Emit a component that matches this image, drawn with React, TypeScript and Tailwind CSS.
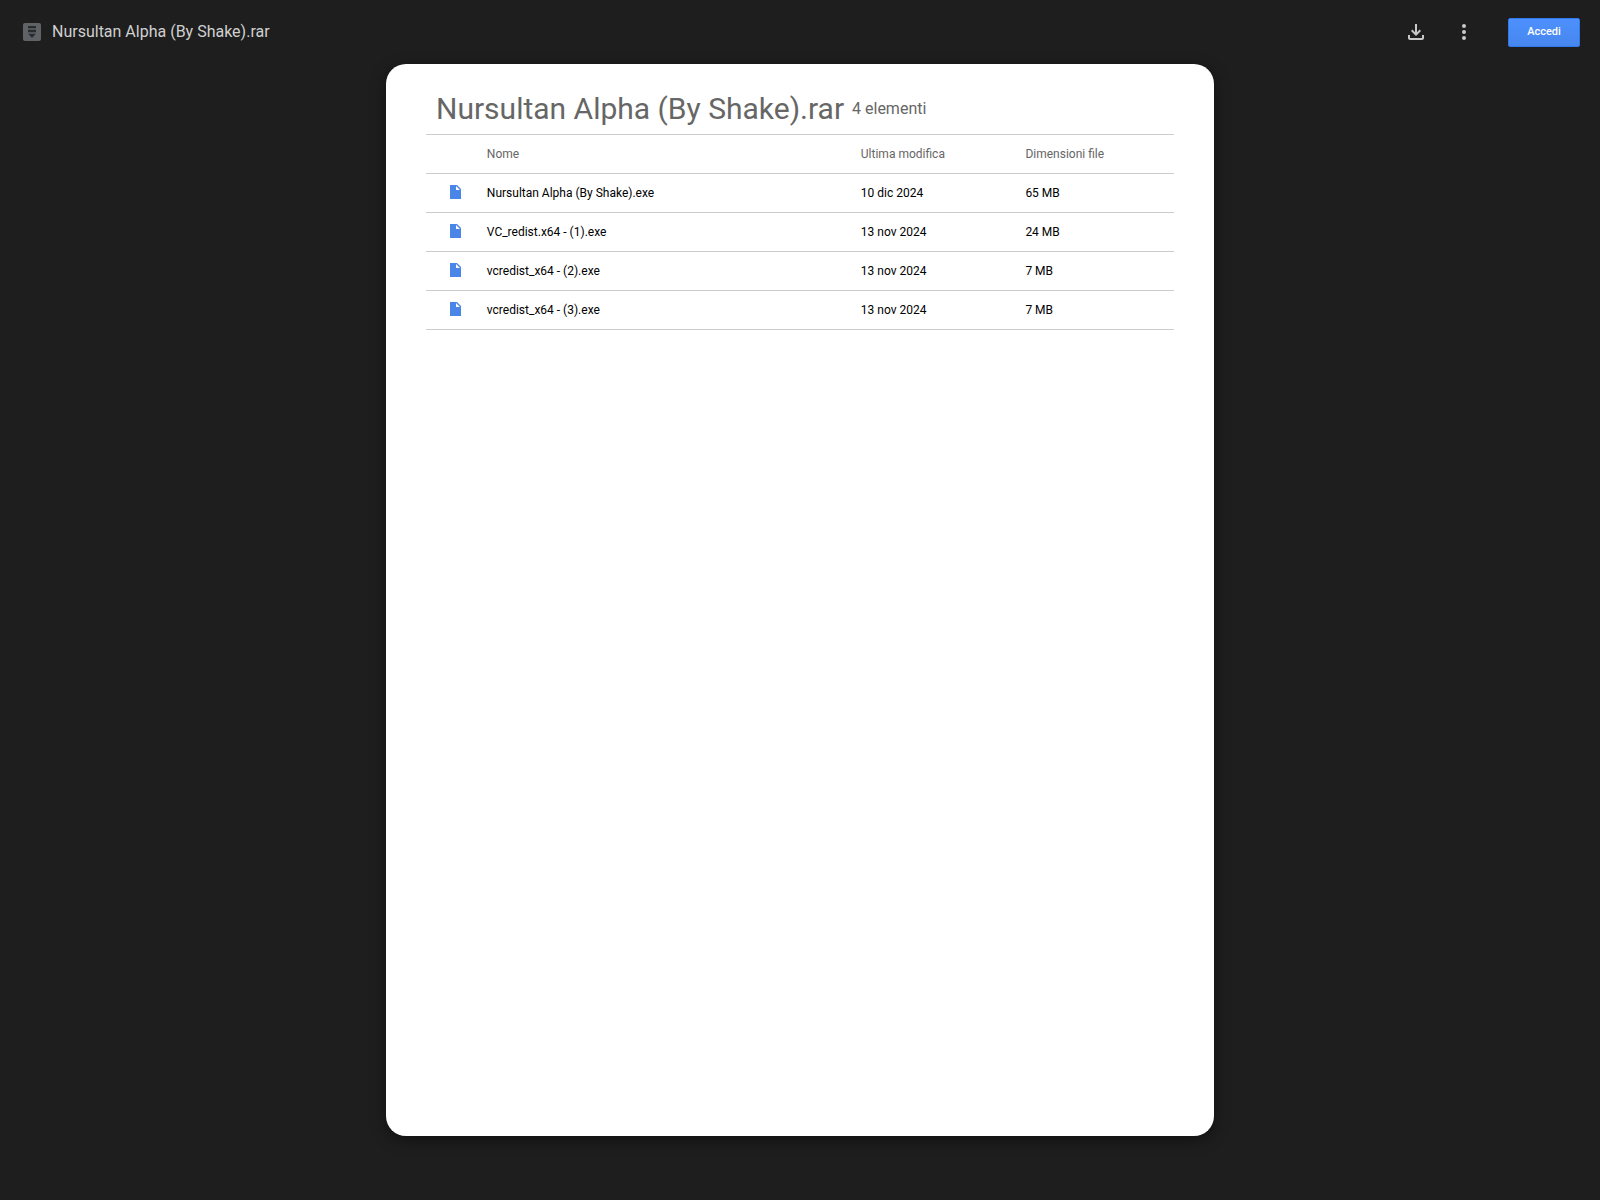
type Entry = { name: string; modified: string; size: string };

const entries: Entry[] = [
  { name: 'Nursultan Alpha (By Shake).exe', modified: '10 dic 2024', size: '65 MB' },
  { name: 'VC_redist.x64 - (1).exe', modified: '13 nov 2024', size: '24 MB' },
  { name: 'vcredist_x64 - (2).exe', modified: '13 nov 2024', size: '7 MB' },
  { name: 'vcredist_x64 - (3).exe', modified: '13 nov 2024', size: '7 MB' },
];

function ArchiveIcon() {
  return (
    <svg className="size-[18px] shrink-0" viewBox="0 0 18 18" aria-hidden="true">
      <rect width="18" height="18" rx="2" fill="#5f6368" />
      <path d="M5 5h8v2H5zM5 9h8v2H5z" fill="#515458" />
      <path d="M5 3h8v2H5zM5 7h8v2H5zM5.5 11h7L9 15z" fill="#2a2b2d" />
    </svg>
  );
}

function DownloadIcon() {
  return (
    <svg className="size-6" viewBox="0 0 24 24" fill="currentColor" aria-hidden="true">
      <path d="M18 15v3H6v-3H4v3c0 1.1.9 2 2 2h12c1.1 0 2-.9 2-2v-3h-2zm-1-4-1.41-1.41L13 12.17V4h-2v8.17L8.41 9.59 7 11l5 5 5-5z" />
    </svg>
  );
}

function MoreIcon() {
  return (
    <svg className="size-6" viewBox="0 0 24 24" fill="currentColor" aria-hidden="true">
      <circle cx="12" cy="6" r="2" />
      <circle cx="12" cy="12" r="2" />
      <circle cx="12" cy="18" r="2" />
    </svg>
  );
}

function FileIcon() {
  return (
    <svg className="mx-auto h-[14px] w-[11px]" viewBox="0 0 11 14" aria-hidden="true">
      <path d="M0 0h7l4 4v10H0z" fill="#4986e7" />
      <path d="M6 1l4 4H6z" fill="#fff" />
    </svg>
  );
}

export default function App() {
  return (
    <div className="flex min-h-screen flex-col bg-[#1e1e1e] font-['Roboto',sans-serif]">
      <header className="flex h-16 items-center pr-5 pl-[23px]">
        <ArchiveIcon />
        <h1 className="ml-[11px] text-base text-[#d0d0d0]">Nursultan Alpha (By Shake).rar</h1>
        <div className="ml-auto flex items-center text-[#c8c8c8]">
          <button type="button" aria-label="Scarica" className="mr-6">
            <DownloadIcon />
          </button>
          <button type="button" aria-label="Altre azioni" className="mr-8">
            <MoreIcon />
          </button>
          <a
            href="#accedi"
            className="flex h-[29px] w-[72px] items-center justify-center rounded-xs border border-[#3079ed] bg-linear-to-b from-[#4d90fe] to-[#4787ed] text-[11px] font-medium text-white"
          >
            Accedi
          </a>
        </div>
      </header>
      <main className="mx-auto mb-16 w-full max-w-[828px] flex-1 rounded-[20px] bg-white px-10 pt-5 shadow-[0_4px_16px_rgba(0,0,0,0.45)]">
        <div className="flex h-[50px] items-center gap-2 px-[10px] text-[#666]">
          <h2 className="text-[30px] leading-10">Nursultan Alpha (By Shake).rar</h2>
          <span className="text-base">4 elementi</span>
        </div>
        <table className="w-full table-fixed border-collapse text-left text-xs text-black">
          <colgroup>
            <col className="w-[8%]" />
            <col className="w-[50%]" />
            <col className="w-[22%]" />
            <col className="w-[20%]" />
          </colgroup>
          <thead>
            <tr className="h-[39px] border-y border-[#ccc] text-[#666]">
              <th />
              <th className="pl-px font-normal">Nome</th>
              <th className="pl-px font-normal">Ultima modifica</th>
              <th className="pl-px font-normal">Dimensioni file</th>
            </tr>
          </thead>
          <tbody>
            {entries.map((entry) => (
              <tr key={entry.name} className="h-[39px] border-b border-[#ccc]">
                <td className="pb-0.5">
                  <FileIcon />
                </td>
                <td className="pl-px">{entry.name}</td>
                <td className="pl-px">{entry.modified}</td>
                <td className="pl-px">{entry.size}</td>
              </tr>
            ))}
          </tbody>
        </table>
      </main>
    </div>
  );
}
